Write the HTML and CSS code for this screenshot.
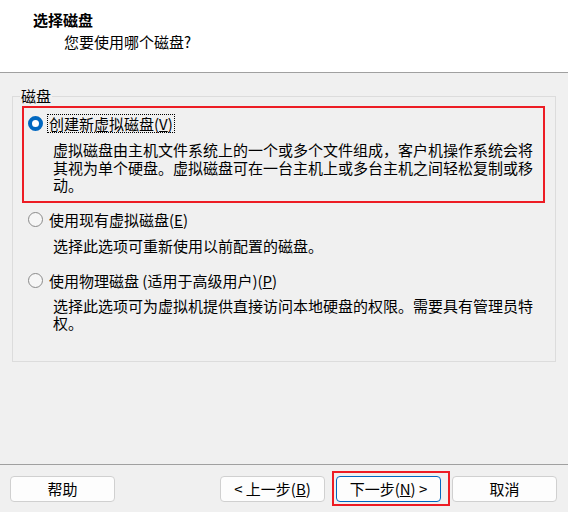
FILE: index.html
```html
<!DOCTYPE html>
<html lang="zh-CN">
<head>
<meta charset="UTF-8">
<title>新建虚拟机向导</title>
<link rel="stylesheet" href="styles.css">
</head>
<body>

<div class="header">
    <div class="title">选择磁盘</div>
    <div class="subtitle">您要使用哪个磁盘?</div>
</div>

<div class="content">
    <div class="group">
        <div class="legend">磁盘</div>
        <div class="option selected">
            <div class="choice"><span class="radio checked"></span><span class="label focus">创建新虚拟磁盘(<u>V</u>)</span></div>
            <p class="desc">虚拟磁盘由主机文件系统上的一个或多个文件组成，客户机操作系统会将其视为单个硬盘。虚拟磁盘可在一台主机上或多台主机之间轻松复制或移动。</p>
        </div>
        <div class="option second">
            <div class="choice"><span class="radio"></span><span class="label">使用现有虚拟磁盘(<u>E</u>)</span></div>
            <p class="desc">选择此选项可重新使用以前配置的磁盘。</p>
        </div>
        <div class="option third">
            <div class="choice"><span class="radio"></span><span class="label">使用物理磁盘 (适用于高级用户)(<u>P</u>)</span></div>
            <p class="desc">选择此选项可为虚拟机提供直接访问本地硬盘的权限。需要具有管理员特权。</p>
        </div>
    </div>
</div>

<div class="footer">
    <button class="btn">帮助</button>
    <div class="nav">
        <button class="btn">&lt; 上一步(<u>B</u>)</button>
        <span class="marked"><button class="btn default">下一步(<u>N</u>) &gt;</button></span>
        <button class="btn">取消</button>
    </div>
</div>

</body>
</html>
```

FILE: styles.css
```css
html, body {
    margin: 0;
    height: 100%;
}
body {
    display: flex;
    flex-direction: column;
    font-family: "Noto Sans CJK SC", "Noto Sans", sans-serif;
    font-size: 15px;
    color: #000;
    background-color: #f0f0f0;
}
.header {
    height: 72px;
    flex: none;
    box-sizing: border-box;
    padding: 10px 0 0 33px;
    background-color: #fff;
    border-bottom: 1px solid #a0a0a0;
    height: 73px;
}
.title {
    font-weight: bold;
    line-height: 20px;
}
.subtitle {
    margin: 2px 0 0 31px;
    line-height: 20px;
}
.content {
    flex: 1;
    padding: 23px 12px 0 12px;
}
.group {
    height: 266px;
    box-sizing: border-box;
    border: 1px solid #dcdcdc;
}
.legend {
    width: fit-content;
    margin: -10px 0 0 7px;
    padding: 0 1px;
    line-height: 18px;
    background-color: #f0f0f0;
}
.option {
    padding-left: 15px;
}
.option.selected {
    margin: 1px 10px 0 9px;
    padding: 6px 0 7px 4px;
    border: 2px solid #ed1c24;
}
.option.second {
    margin-top: 7.5px;
}
.option.third {
    margin-top: 16px;
}
.choice {
    display: flex;
    align-items: center;
    height: 19px;
}
.radio {
    width: 15px;
    height: 15px;
    box-sizing: border-box;
    margin-right: 4px;
    border: 1px solid #8a8a8a;
    border-radius: 50%;
    background-color: #f6f6f6;
}
.radio.checked {
    border: 4px solid #0067c0;
    background-color: #fff;
}
.label {
    padding: 0 1px;
    line-height: 17px;
    border: 1px dotted transparent;
}
.label.focus {
    border-color: #000;
}
.desc {
    max-width: 485px;
    margin: 8px 0 0 25px;
    line-height: 17.5px;
}
.option.third .desc {
    margin-top: 7px;
}
.footer {
    flex: none;
    height: 48px;
    box-sizing: border-box;
    display: flex;
    justify-content: space-between;
    padding: 11px 11px 0 10px;
    border-top: 1px solid #a0a0a0;
}
.nav {
    display: flex;
    gap: 11px;
}
.btn {
    width: 105px;
    height: 26px;
    padding: 0;
    font-family: inherit;
    font-size: 15px;
    line-height: 24px;
    color: #000;
    background-color: #fdfdfd;
    border: 1px solid #d0d0d0;
    border-radius: 4px;
}
.btn.default {
    border-color: #0067c0;
}
.marked {
    position: relative;
    display: flex;
}
.marked::after {
    content: "";
    position: absolute;
    left: -4px;
    top: -5px;
    width: 118px;
    height: 35px;
    box-sizing: border-box;
    border: 2px solid #ed1c24;
    pointer-events: none;
}
```
